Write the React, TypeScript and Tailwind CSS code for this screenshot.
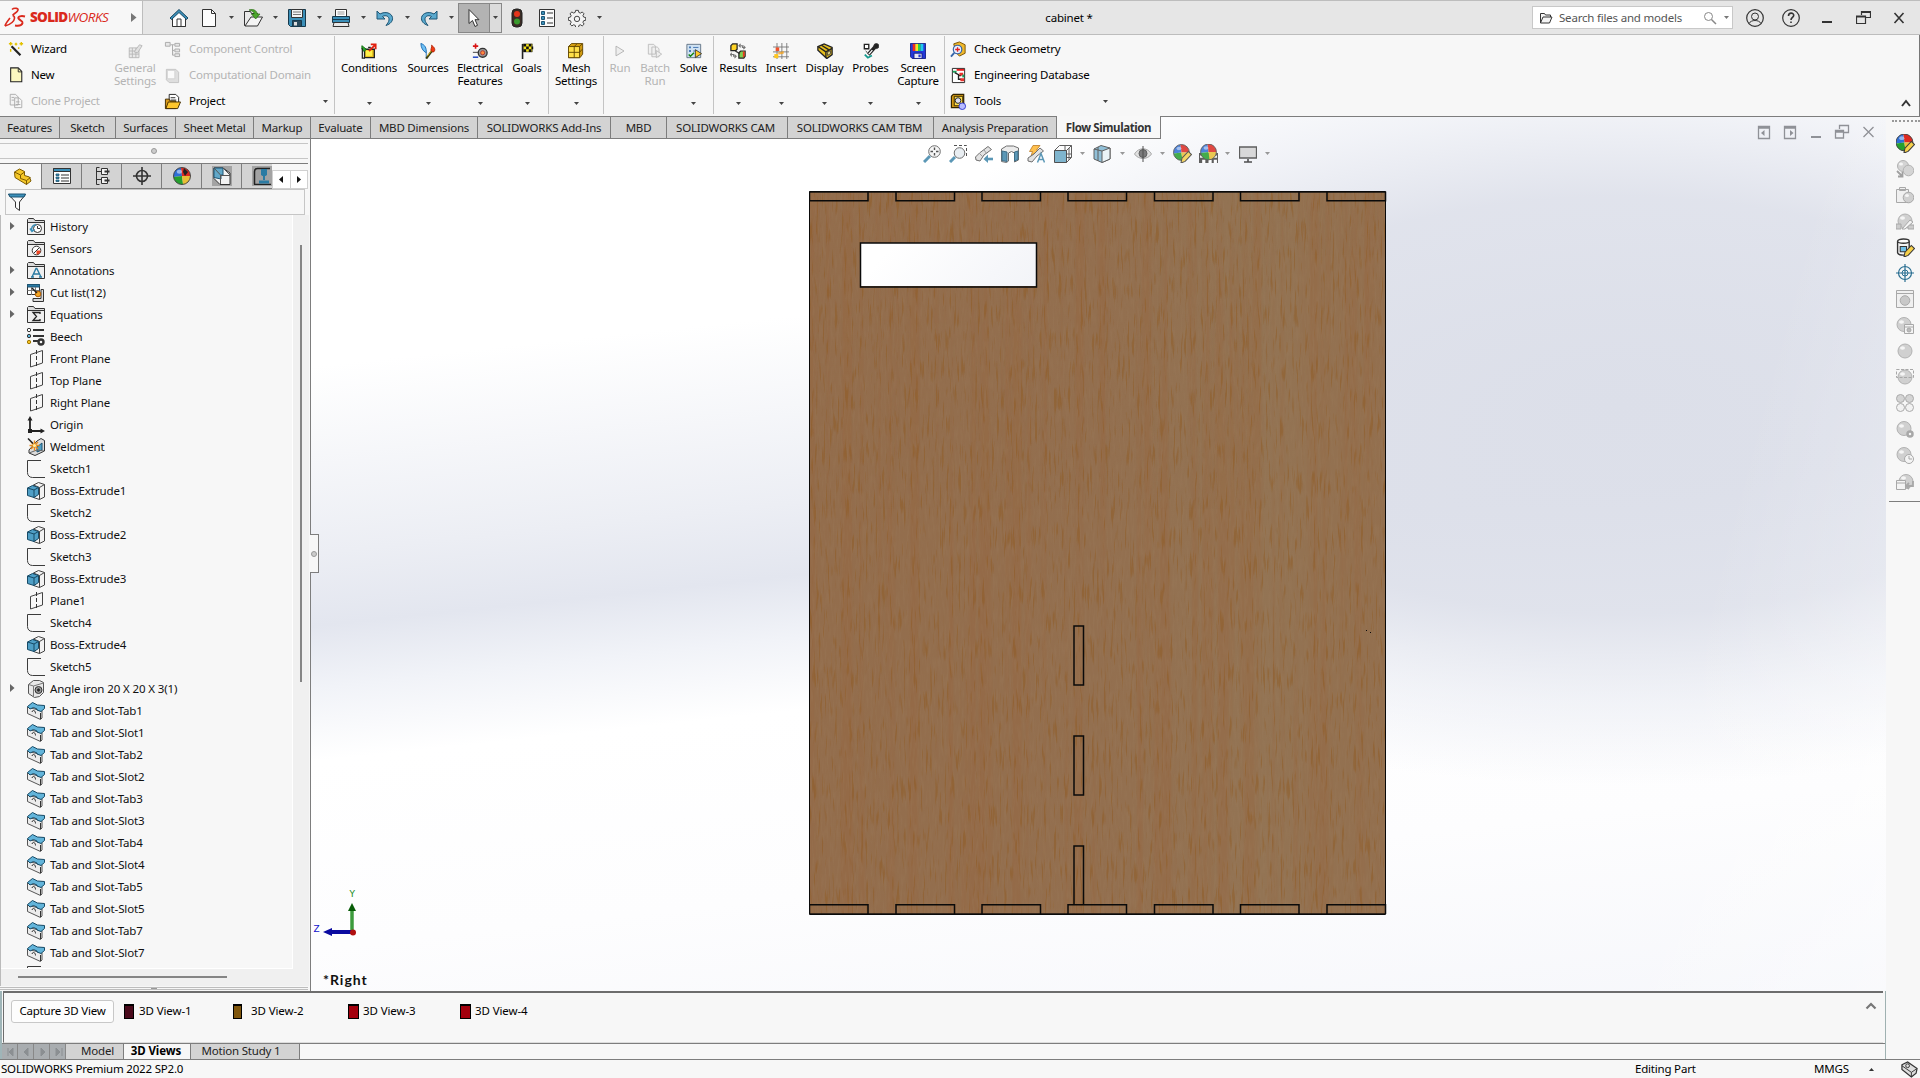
import React from "react";

type Kids = { children?: React.ReactNode };
const BLUE = "#3b8fb8";
const DARK = "#333333";

function Svg({ s = 18, vb = 18, children, className = "" }: Kids & { s?: number; vb?: number; className?: string }) {
  return (
    <svg width={s} height={s} viewBox={`0 0 ${vb} ${vb}`} fill="none" stroke={DARK} strokeWidth="1" className={"shrink-0 " + className}>
      {children}
    </svg>
  );
}

function Down({ c = "#444" }: { c?: string }) {
  return (
    <svg width="5" height="3" viewBox="0 0 5 3" className="shrink-0">
      <path d="M0 0h5L2.500 3z" fill={c} />
    </svg>
  );
}

/* ---------- title bar icons ---------- */
const Home = () => (
  <Svg s={20} vb={20}>
    <path d="M3.500 9v9.500h13V9L10 3z" fill="#fff" />
    <path d="M1 10L10 1.500 19 10l-1.500 1.500L10 4.500 2.500 11.500z" fill={BLUE} stroke="#1c4a63" />
    <path d="M8 18v-7h4v7M3.500 18.500h13" />
  </Svg>
);
const Doc = () => (
  <Svg s={20} vb={20}>
    <path d="M3.500 1.500h9l4 4v13h-13z" fill="#fdfdfd" />
    <path d="M12.500 1.500v4h4" />
  </Svg>
);
const OpenIcon = () => (
  <Svg s={20} vb={20}>
    <path d="M1.500 3.500h6l1 2h6v12h-13z" fill="#e9e9e9" />
    <path d="M2 18L8 9h11.500l-5 9z" fill="#f4f4f4" />
    <path d="M6 2c5-1.500 8 1 8.200 4H17l-4.300 5L8.500 6h2.700C11 4 9 2.600 6 2z" fill="#4ca52c" stroke="#2c6f16" strokeWidth=".7" />
  </Svg>
);
const Save = () => (
  <Svg s={20} vb={20}>
    <path d="M1.500 1.500h17v17H3.500l-2-2z" fill={BLUE} stroke="#17394c" />
    <path d="M4.500 1.500h11v8h-11z" fill="#f4f4f4" />
    <path d="M6 4h8M6 6.500h8" stroke="#777" />
    <path d="M5.500 12.500h9v6h-9z" fill="#2a4a5c" stroke="#17394c" />
    <path d="M7 14h3v3.500H7z" fill="#ddd" stroke="none" />
  </Svg>
);
const Print = () => (
  <Svg s={20} vb={20}>
    <path d="M4.500 8V1.500h11V8" fill="#fff" />
    <path d="M6.500 4h7M6.500 6h7" stroke="#999" />
    <path d="M1.500 8.500h17v6h-17z" fill={BLUE} stroke="#17394c" />
    <path d="M3 14.500h14l1 4H2z" fill="#e8e8e8" />
    <path d="M2 11.500h16" stroke="#17394c" />
  </Svg>
);
const Undo = () => (
  <Svg s={20} vb={20}>
    <path d="M2 3v8h8L7.500 8.500C11 6.500 14.500 8.500 14 12c-.3 2-1.500 3.500-3 5.500 4.500-1.500 7-4.500 6.500-8C16.500 5 10.500 3 5 6z" fill="#5aa9ce" stroke="#1d5574" />
  </Svg>
);
const Redo = () => (
  <Svg s={20} vb={20}>
    <path d="M18 3v8h-8l2.500-2.500C9 6.500 5.500 8.500 6 12c.3 2 1.500 3.500 3 5.500C4.500 16 2 13 2.500 9.500 3.500 5 9.500 3 15 6z" fill="#5aa9ce" stroke="#1d5574" />
  </Svg>
);
const Cursor = () => (
  <Svg s={20} vb={20}>
    <path d="M5 1.500v14l3.500-3 2.500 6 2.500-1.200-2.500-5.600H15z" fill="#fff" />
  </Svg>
);
const Traffic = () => (
  <Svg s={20} vb={20}>
    <rect x="5" y="1" width="10" height="18" rx="4" fill="#3b2b25" stroke="#222" />
    <circle cx="10" cy="6" r="3" fill="#e5351c" stroke="none" />
    <circle cx="10" cy="13.500" r="3" fill="#3a9a2d" stroke="none" />
  </Svg>
);
const ListIcon = () => (
  <Svg s={20} vb={20}>
    <path d="M2.500 1.500h15v17h-15z" fill="#fafafa" />
    <path d="M4.500 3.500h3v3h-3zM4.500 8.500h3v3h-3zM4.500 13.500h3v3h-3z" fill={BLUE} stroke="#1d5574" />
    <path d="M10 5h6M10 10h6M10 15h6" />
  </Svg>
);
const Gear = () => (
  <Svg s={18} vb={20}>
    <path d="M8.500 1.500h3l.5 2.300 1.800.8 2-1.300 2 2-1.200 2 .8 1.700 2.300.5v3l-2.300.5-.8 1.800 1.300 2-2.100 2-2-1.300-1.700.8-.5 2.300h-3l-.5-2.300-1.800-.8-2 1.300-2-2 1.200-2-.8-1.800-2.300-.5v-3l2.300-.5.8-1.700-1.300-2 2.100-2 2 1.200 1.700-.8z" fill="#f3f3f3" />
    <circle cx="10" cy="11" r="3" />
  </Svg>
);

/* ---------- ribbon icons ---------- */
const Wizard = () => (
  <Svg s={16}>
    <path d="M4 6l10 10" stroke="#222" strokeWidth="2.500" />
    <path d="M3 1v4M1 3h4M9 2v3M7.500 3.500h3M15 1v4M13 3h4M12 7v2M3 9v3" stroke="#e2c100" strokeWidth="1.600" />
  </Svg>
);
const NewDoc = () => (
  <Svg s={16}>
    <path d="M3 1h8.500l4 4v11.500H3z" fill="#fbf7c0" stroke="#222" strokeWidth="1.200" />
    <path d="M11.500 1.500v4h4" stroke="#222" />
  </Svg>
);
const Clone = () => (
  <Svg s={16} className="opacity-40">
    <path d="M2.500 1.500h6l3 3v9h-9z" fill="#eee" />
    <path d="M7.500 5.500h5l3 3v8h-8zM4 5h3M4 8h3M9 10h4M9 13h5" />
  </Svg>
);
const GenSet = () => (
  <Svg className="opacity-50">
    <path d="M2.500 5.500h11v11h-11zM2.500 9h11M2.500 12.500h11M6 5.500v11M10 5.500v11" fill="#ddd" stroke="#777" />
    <path d="M8 10l6-8 3 1-5 8z" fill="#ccc" stroke="#777" />
  </Svg>
);
const CompCtl = () => (
  <Svg s={17} className="opacity-60">
    <path d="M1.500 1.500h5v4h-5zM11.500 2.500h5v3h-5zM11.500 8.500h5v3h-5zM11.500 13.500h5v3h-5zM7 4h4M9 4v11h2M9 10h2" fill="#ddd" stroke="#777" />
  </Svg>
);
const CompDom = () => (
  <Svg s={17} className="opacity-40">
    <path d="M2.500 2.500h10l3 3v11h-10l-3-3z" fill="#bbb" stroke="#777" />
    <path d="M3.500 3.500h8v9h-8z" fill="#fff" stroke="#999" />
  </Svg>
);
const Project = () => (
  <Svg s={17}>
    <path d="M5.500 1.500h7l3 3v8h-10z" fill="#fff" stroke="#222" />
    <path d="M7 5h5M7 7.500h6" stroke="#222" />
    <path d="M1.500 6.500h4l1 2h6v8h-11z" fill="#d99a1b" stroke="#422c00" />
    <path d="M2 16.500l2.500-7h13l-3 7z" fill="#ffc62c" stroke="#422c00" />
  </Svg>
);
const Conditions = () => (
  <Svg>
    <path d="M4 7h11v9.500H4z" fill="#e8bf1e" stroke="#222" strokeWidth="1.500" />
    <path d="M5.500 8.500h7v6h-7z" fill="#fff04a" stroke="none" />
    <path d="M1 3l5 4-2.500 2.500L1 7z" fill="#2aa52a" stroke="#0a6a0a" />
    <path d="M9 9l7-7M11 1.500h5.500V7" stroke="#e02010" strokeWidth="2" />
    <path d="M1.500 6v11h3M8 5h3" stroke="#222" strokeWidth="1.400" />
  </Svg>
);
const Sources = () => (
  <Svg>
    <path d="M1 .500c4.500 1.500 6.500 5 6 10.500C3 9 1 5 1 .500z" fill="#6fc1f5" stroke="#1668b0" />
    <path d="M7 17.500v-7" stroke="#1668b0" />
    <path d="M13 10c-2-3 1-5 0-7.500 3 2 5 5 2.500 7.500z" fill="#f03a14" stroke="#b02000" />
    <path d="M7 17.500l6-8" stroke="#3b3b10" strokeWidth="2.400" />
    <path d="M8 15l4.500-6" stroke="#e2c11c" />
  </Svg>
);
const Electrical = () => (
  <Svg>
    <path d="M1 3.500h6M4 .500v6" stroke="#d81414" strokeWidth="1.800" />
    <path d="M1 16h6" stroke="#2c50c8" strokeWidth="1.800" />
    <circle cx="12" cy="11" r="5" fill="#999" stroke="#333" strokeWidth="1.500" />
    <circle cx="12" cy="11" r="2.300" fill="#ff8a3c" stroke="#a33" />
    <path d="M1 10.500h6" />
  </Svg>
);
const Goals = () => (
  <Svg>
    <path d="M4 1v17" stroke="#222" strokeWidth="1.800" />
    <path d="M5 1h10v9H5z" fill="#f5e31a" stroke="#222" strokeWidth=".6" />
    <path d="M5 1h3v3H5zM11 1h3v3h-3zM8 4h3v3H8zM14 4h2v3h-2zM5 7h3v3H5zM11 7h3v3h-3z" fill="#111" stroke="none" />
  </Svg>
);
const Mesh = () => (
  <Svg>
    <path d="M4 .500h12.500v12l-3 4H.500V4z" fill="#d29c10" stroke="#5b4200" />
    <path d="M.500 4h12.500v12.500H.500z" fill="#ffe04a" stroke="#5b4200" />
    <path d="M.500 10.500H13M7 4v12.500M7 4l3-3M13 10.500l3-3.500M13 4l3-3" stroke="#5b4200" />
  </Svg>
);
const Run = () => (
  <Svg>
    <path d="M4.500 3.500l9 5.500-9 5.500z" stroke="#b0b0b0" fill="#eee" />
  </Svg>
);
const Batch = () => (
  <Svg>
    <path d="M1.500 1.500h6l2 2v9h-8zM5.500 4.500h6l2 2v9h-8z" stroke="#bbb" fill="#f0f0f0" />
    <path d="M10.500 8.500l6 4-6 4z" stroke="#bbb" fill="#eee" />
  </Svg>
);
const Solve = () => (
  <Svg>
    <path d="M1 1.500h15.500v15H1z" fill="#cfe2f3" stroke="#5d6f80" />
    <path d="M3.500 4h2v2h-2zM3.500 8h2v2h-2z" fill="#3b6fb0" stroke="none" />
    <path d="M8 5h6M8 9h3" stroke="#3b6fb0" />
    <path d="M3 13l2 2 4-4" stroke="#13850f" strokeWidth="1.600" />
    <path d="M10.500 7.500l7 4.500-7 4.500z" fill="#ffc928" stroke="#333" />
  </Svg>
);
const Results = () => (
  <Svg>
    <path d="M1 3l2-2h5v6L6.500 8.500H1z" fill="#ffd426" stroke="#222" strokeWidth="1.400" />
    <path d="M10 11l2-2h5v6l-1.500 2H10z" fill="#7fcf52" stroke="#222" strokeWidth="1.400" />
    <path d="M14.500 9.500v7l2-2V9.500z" fill="#ee3a20" stroke="none" />
    <path d="M11 3h3v2h3M12 1l-2 2 2 2M15 3l2 2-2 2M1 13h3v2h3M2 11l-1.500 2L2 15M5 13l2 2-2 2" stroke="#777" strokeWidth="1.200" />
    <path d="M6 9l5 3" strokeWidth="1.500" />
  </Svg>
);
const Insert = () => (
  <Svg>
    <path d="M4.500 0v18M10 0v18M15.500 0v18M0 4.500h18M0 10h18M0 15.500h18" stroke="#777" />
    <path d="M3 5h4v4H3z" fill="#f0522c" stroke="none" />
    <path d="M1.500 12.500H6V17H1.500z" fill="#ffc61e" stroke="none" />
    <path d="M5 11l7-2v3l-5 1z" fill="#f5a524" stroke="none" opacity=".8" />
  </Svg>
);
const Display = () => (
  <Svg>
    <path d="M1 4l7-3 9 4v8l-6 4.500L1 8z" fill="#e6be1c" stroke="#222" strokeWidth="1.500" />
    <path d="M1 4l9 6 7-4M10 10v7M5 2.500l8 5" stroke="#222" strokeWidth="1.500" />
    <path d="M12 10.500l3-2V12l-3 2z" fill="#fff39a" />
  </Svg>
);
const Probes = () => (
  <Svg>
    <path d="M1.500 1.500h5v5h-5z" fill="#fff" stroke="#222" strokeWidth="1.500" />
    <path d="M6 13l8-9" stroke="#222" strokeWidth="4" />
    <path d="M6.500 12.500l4-4.500" stroke="#fff" strokeWidth="1.500" />
    <circle cx="15" cy="3.500" r="2.800" fill="#222" />
    <path d="M2 13l3.500 3.500L10 14" stroke="#159a8e" strokeWidth="2" />
    <path d="M3 9l2 2" stroke="#222" />
  </Svg>
);
const Screen = () => (
  <Svg>
    <path d="M.500.500h17v17h-15l-2-2z" fill="#2438d8" stroke="#111c80" />
    <path d="M3 1h3v8H3z" fill="#f02c1c" stroke="none" />
    <path d="M6 1h3v8H6z" fill="#ffe11f" stroke="none" />
    <path d="M9 1h3v8H9z" fill="#28d04a" stroke="none" />
    <path d="M12 1h3v8h-3z" fill="#20c8f0" stroke="none" />
    <path d="M4.500 11.500h9v6h-9z" fill="#e8e8f4" stroke="#111c80" />
    <path d="M9.500 13h2.500v3H9.500z" fill="#2438d8" stroke="none" />
  </Svg>
);
const Check = () => (
  <Svg s={17}>
    <path d="M4 3l6-2 6 3v9l-6 3-4-4z" fill="#f0b82a" stroke="#7a5200" />
    <circle cx="8" cy="9" r="4.500" fill="#e8f0ff" stroke="#3564a8" strokeWidth="1.300" />
    <path d="M5.500 9h5M8 6.500v5" stroke="#e02020" strokeWidth="1.400" />
    <path d="M1 16.500l3.500-4" stroke="#3564a8" strokeWidth="2" />
  </Svg>
);
const EngDb = () => (
  <Svg s={17}>
    <path d="M2.500 1.500h13v15h-13z" fill="#fff" stroke="#222" />
    <path d="M7 2h8v2H7z" fill="#e81c1c" stroke="none" />
    <path d="M3 4h4v2H3z" fill="#18a058" stroke="none" />
    <path d="M5 6l4 2v5h3M9 9h3" stroke="#222" strokeWidth="1.400" />
    <path d="M10 6h4v3h-4zM11 12h4v3h-4z" fill="#e8322c" stroke="none" />
    <path d="M13 8h2v3h-2z" fill="#18a058" stroke="none" />
  </Svg>
);
const Tools = () => (
  <Svg s={17}>
    <path d="M1.500 3.500l2-2h11v12l-2 2h-11z" fill="#d59a13" stroke="#332400" strokeWidth="1.300" />
    <path d="M4.500 3.500h9v10h-9z" fill="#ffe14c" stroke="#332400" />
    <circle cx="8.500" cy="8" r="3" fill="#dde" stroke="#222" />
    <circle cx="13" cy="14" r="3.500" fill="#b8bcff" stroke="#3038d0" />
  </Svg>
);

/* ---------- feature tree icons ---------- */
const Folder = ({ children }: Kids) => (
  <Svg>
    <path d="M.500 16.500V1.500l1-1h5l1.500 2h9.500v14z" fill="#dcdcdc" />
    <path d="M1.500 5.500h15" stroke="#f8f8f8" />
    <path d="M.500 4.500h17" />
    <path d="M1 5h16v11H1z" fill="#efefef" stroke="none" />
    {children}
  </Svg>
);
const treeIcon: Record<string, React.ReactNode> = {
  history: (
    <Folder>
      <circle cx="10.500" cy="10.500" r="4" fill="#fff" />
      <path d="M10.500 8v2.500h2.500" />
      <path d="M5 13c-1-3 0-6 4-6.500M3 10.500l2 3 2.500-2" stroke={BLUE} strokeWidth="1.500" />
    </Folder>
  ),
  sensors: (
    <Folder>
      <circle cx="9.500" cy="10.500" r="4.300" fill="#fff" />
      <path d="M9.500 10.500h4a4 4 0 0 1-4 4z" fill="#ee4422" stroke="none" />
      <path d="M7 13l5-5" />
    </Folder>
  ),
  annotations: (
    <Folder>
      <path d="M5 15L9 6.500h.8L14 15M6.500 12h6M4 15h3M12 15h3" stroke="#2b7ba3" strokeWidth="1.400" />
    </Folder>
  ),
  cutlist: (
    <Svg>
      <path d="M.500.500h12v10H.500z" fill="#fff" />
      <path d="M.500.500h12v2.500H.500z" fill="#2b7ba3" stroke="#1d5574" />
      <path d="M.500 6.500h12M4.500 3v8M8.500 3v8" stroke="#777" />
      <path d="M6 14.500h8v-9h2.500v12H6z" fill="#ddd" />
      <circle cx="11" cy="10" r="2.800" fill="#f4a623" stroke="#b25c00" />
      <path d="M5 4l5 5" stroke="#222" strokeWidth="1.500" />
    </Svg>
  ),
  equations: (
    <Folder>
      <path d="M13 8V6.500H6l3.500 4L6 14.500h7V13" stroke="#222" strokeWidth="1.300" />
    </Folder>
  ),
  material: (
    <Svg>
      <path d="M6 2h11M6 8h11M6 13h5" strokeWidth="1.800" />
      <circle cx="2" cy="2" r="1.700" fill="#fff" />
      <circle cx="2" cy="8" r="1.700" fill="#5ab4dc" />
      <circle cx="2" cy="14" r="1.700" fill="#f4c020" stroke="#a07800" />
      <circle cx="14" cy="14" r="2.500" strokeWidth="2.400" />
    </Svg>
  ),
  plane: (
    <Svg>
      <path d="M3.500 4.500l12-4v12.500l-12 4z" stroke="#444" />
      <path d="M9.500 0v18" strokeDasharray="4 2" />
    </Svg>
  ),
  origin: (
    <Svg>
      <path d="M3 3v12h12" stroke="#222" strokeWidth="1.800" />
      <path d="M3 0L.500 4.500h5zM18 15l-4.500-2.500v5z" fill="#222" stroke="none" />
      <path d="M1 13h4v4H1z" fill="#222" stroke="none" />
    </Svg>
  ),
  weld: (
    <Svg>
      <path d="M10 3l4-2.500 3.500 2V13L8 17.500l-6-2.500v-3z" fill="#dcdcdc" />
      <path d="M10 9l5-4v7l-5 2z" fill="#4f9fc6" stroke="#1d5574" />
      <path d="M2 15l8-3 7 1" stroke="#666" />
      <path d="M7.500 2.500v10M2.500 7.500h10M4 4l7 7M11 4l-7 7" stroke="#e88a1a" strokeWidth="1.400" />
      <circle cx="7.500" cy="7.500" r="1.600" fill="#fff0a0" stroke="none" />
      <path d="M1 .500l5 5" stroke="#222" strokeWidth="1.500" />
    </Svg>
  ),
  sketch: (
    <Svg>
      <path d="M14 .500H.500v12c0 2.500 1.500 5 5 5H18" stroke="#3c3c3c" />
    </Svg>
  ),
  boss: (
    <Svg>
      <path d="M6.500 3l5-2.500 6 2V15l-5 2.500-6-2z" fill="#f2f2f2" stroke="#444" />
      <path d="M12.500 5.500v12M6.500 3l6 2.500 5-3" stroke="#444" />
      <path d="M.500 6l5-2.500 6 2v7l-4.500 3L.500 13.500z" fill="#4f9fc6" stroke="#174a66" />
      <path d="M.500 6L7 8v7.500M7 8l4.500-2.500" stroke="#174a66" />
    </Svg>
  ),
  angle: (
    <Svg>
      <path d="M1.500 4.500l5-4h6l4 2v10l-4 4-5 1-6-4z" fill="#e8e8e8" stroke="#555" />
      <path d="M1.500 4.500l5 1.500v11M6.500 6l10-3" stroke="#777" />
      <circle cx="11.500" cy="10" r="3.500" fill="#999" stroke="#333" />
      <circle cx="11.500" cy="10" r="1.200" fill="#222" />
    </Svg>
  ),
  tab: (
    <Svg>
      <path d="M.500 5v6.500l13 6 1.500-1.500V9z" fill="#ececec" stroke="#555" />
      <path d="M.500 4.500L5.500.500l5 2.500 7 .5v3l-3.500 3-4-1.500V7L6.500 5.500 3 7z" fill="#62b4da" stroke="#174a66" />
      <path d="M5 10c.5-2.500 3.500-2 3.500 1.500M13.500 11v6" stroke="#333" />
    </Svg>
  ),
};

const rows: [string, string, boolean?][] = [
  ["history", "History", true],
  ["sensors", "Sensors"],
  ["annotations", "Annotations", true],
  ["cutlist", "Cut list(12)", true],
  ["equations", "Equations", true],
  ["material", "Beech"],
  ["plane", "Front Plane"],
  ["plane", "Top Plane"],
  ["plane", "Right Plane"],
  ["origin", "Origin"],
  ["weld", "Weldment"],
  ["sketch", "Sketch1"],
  ["boss", "Boss-Extrude1"],
  ["sketch", "Sketch2"],
  ["boss", "Boss-Extrude2"],
  ["sketch", "Sketch3"],
  ["boss", "Boss-Extrude3"],
  ["plane", "Plane1"],
  ["sketch", "Sketch4"],
  ["boss", "Boss-Extrude4"],
  ["sketch", "Sketch5"],
  ["angle", "Angle iron 20 X 20 X 3(1)", true],
  ["tab", "Tab and Slot-Tab1"],
  ["tab", "Tab and Slot-Slot1"],
  ["tab", "Tab and Slot-Tab2"],
  ["tab", "Tab and Slot-Slot2"],
  ["tab", "Tab and Slot-Tab3"],
  ["tab", "Tab and Slot-Slot3"],
  ["tab", "Tab and Slot-Tab4"],
  ["tab", "Tab and Slot-Slot4"],
  ["tab", "Tab and Slot-Tab5"],
  ["tab", "Tab and Slot-Slot5"],
  ["tab", "Tab and Slot-Tab7"],
  ["tab", "Tab and Slot-Slot7"],
  ["sketch", ""],
];

/* ---------- shared spheres ---------- */
const ColorBall = ({ cx = 9, cy = 9, r = 7.5 }: { cx?: number; cy?: number; r?: number }) => (
  <g stroke="none" transform={`translate(${cx} ${cy}) scale(${r / 8})`}>
    <path d="M0 0L-1-8A8 8 0 0 0-8 1z" fill="#2f6fd6" />
    <path d="M0 0L-1-8A8 8 0 0 1 8 0z" fill="#dd2a22" />
    <path d="M0 0L-8 1A8 8 0 0 0 1 8z" fill="#25a02e" />
    <path d="M0 0L1 8A8 8 0 0 0 8 0z" fill="#e9bf35" />
    <circle r="8" fill="none" stroke="#444" strokeWidth=".9" />
    <ellipse cx="-2.500" cy="-4" rx="2.500" ry="1.800" fill="#fff" opacity=".5" />
  </g>
);
const Pencil = () => <path d="M7.500 18l1-4.500L14.500 7l3 3-6 6.500z" fill="#f6d14a" stroke="#3a3a3a" />;

function Cell({ w, children, className = "" }: Kids & { w: string; className?: string }) {
  return <div className={`flex shrink-0 items-center justify-center ${w} ${className}`}>{children}</div>;
}

function TitleBar() {
  return (
    <header className="flex h-[35px] shrink-0 items-center border-t border-b border-[#bdbdbd] bg-[#e6e6e6]">
      <div className="flex h-full w-[143px] shrink-0 items-center border-r border-[#bdbdbd] bg-[#f7f7f7] pl-[4px]">
        <svg width="22" height="22" viewBox="0 0 22 22" fill="none" stroke="#da291c" strokeWidth="1.600">
          <path d="M8 2.500c2-2 8-1.500 5.500 1.500-1.500 2-3.500 2.500-5 4.500M8.500 8.500c3 .5 2.500 4.500-.5 7-2 1.700-4 3-7 3.500M1 19c.5-3 3.500-6 5-8" />
          <path d="M21 9.500c-4-1-7.500 0-6.500 2s4.500 2 4 4.500c-.5 2.200-4 3-7.500 2.500" strokeWidth="2" />
        </svg>
        <span className="ml-[4px] w-[92px] whitespace-nowrap font-['Open_Sans'] text-[13.500px] leading-none tracking-[-0.5px] text-[#da291c]">
          <b className="font-extrabold tracking-[-0.7px]">SOLID</b><span className="italic">WORKS</span>
        </span>
        <svg width="6" height="9" viewBox="0 0 6 9" className="ml-[9px]"><path d="M0 0l5.500 4.500L0 9z" fill="#777" /></svg>
      </div>
      <Cell w="w-[22px]" className="ml-[25px]"><Home /></Cell>
      <Cell w="w-[22px]" className="ml-[8px]"><Doc /></Cell>
      <Cell w="w-[22px]"><Down /></Cell>
      <Cell w="w-[22px]"><OpenIcon /></Cell>
      <Cell w="w-[22px]"><Down /></Cell>
      <Cell w="w-[22px]"><Save /></Cell>
      <Cell w="w-[22px]"><Down /></Cell>
      <Cell w="w-[22px]"><Print /></Cell>
      <Cell w="w-[22px]"><Down /></Cell>
      <Cell w="w-[22px]"><Undo /></Cell>
      <Cell w="w-[22px]"><Down /></Cell>
      <Cell w="w-[22px]"><Redo /></Cell>
      <Cell w="w-[18px]" className="pl-1"><Down /></Cell>
      <div className="flex h-[30px] w-[44px] shrink-0 border border-[#888]">
        <Cell w="w-[30px]" className="bg-[#b3b3b3]"><Cursor /></Cell>
        <Cell w="w-[12px]" className="border-l border-[#888] bg-[#dcdcdc]"><Down /></Cell>
      </div>
      <Cell w="w-[30px]"><Traffic /></Cell>
      <Cell w="w-[30px]"><ListIcon /></Cell>
      <Cell w="w-[30px]"><Gear /></Cell>
      <Cell w="w-[12px]" className="pl-[2px]"><Down /></Cell>
      <div className="ml-[419px] w-[92px] shrink-0 text-center text-black">cabinet *</div>
      <div className="ml-auto flex h-[23px] w-[201px] shrink-0 items-center border border-[#c8c8c8] bg-white text-[#555]">
        <Svg s={14} vb={14} className="ml-[6px]">
          <path d="M1.500 12V2.500h4l1 1.500h5v2M1.500 12L4 6h9l-2.500 6z" fill="#f4f4f4" />
        </Svg>
        <span className="ml-[6px] w-[144px] whitespace-nowrap">Search files and models</span>
        <Svg s={14} vb={14}>
          <circle cx="5.500" cy="5.500" r="4" stroke="#888" />
          <path d="M8.500 8.500L13 13" stroke="#888" strokeWidth="1.500" />
        </Svg>
        <span className="ml-[7px]"><Down c="#777" /></span>
      </div>
      <Cell w="w-[36px]" className="ml-[4px]">
        <Svg><circle cx="9" cy="9" r="8.300" strokeWidth="1.200" /><circle cx="9" cy="7.500" r="3.500" /><path d="M3 14.500c2-4 10-4 12 0" /></Svg>
      </Cell>
      <Cell w="w-[36px]">
        <Svg><circle cx="9" cy="9" r="8.300" strokeWidth="1.200" /><path d="M6.500 7c0-4 5.500-3.500 5.200-.5C11.500 8.300 9 8.500 9 11M9 12.500V14" strokeWidth="1.600" /></Svg>
      </Cell>
      <Cell w="w-[36px]"><div className="mt-[9px] h-[2px] w-[10px] bg-[#333]" /></Cell>
      <Cell w="w-[36px]"><Svg s={15} vb={15}><path d="M5.500 5V1.500h9v6H10M.500 6h9v7.500h-9zM.500 7h9M5.500 2.500h9" strokeWidth="1.200" /></Svg></Cell>
      <Cell w="w-[36px]" className="mr-[3px]"><Svg s={12} vb={12}><path d="M1.500 1l9 10M10.500 1l-9 10" strokeWidth="1.600" /></Svg></Cell>
    </header>
  );
}

function Tool({ w, icon, a, b, off, arrow = true }: { w: string; icon: React.ReactNode; a: string; b?: string; off?: boolean; arrow?: boolean }) {
  return (
    <div className={`flex shrink-0 flex-col items-center pt-[8px] [&>svg]:h-4 [&>svg]:w-4 ${w} ${off ? "text-[#b4b4b4]" : "text-black"}`}>
      {icon}
      <span className="mt-[2px] h-[13px] whitespace-nowrap leading-[13px]">{a}</span>
      <span className="h-[13px] whitespace-nowrap leading-[13px]">{b}</span>
      {arrow && <span className="mt-[15px] flex"><Down /></span>}
    </div>
  );
}

function Line({ icon, text, off, iw = "w-[31px]" }: { icon: React.ReactNode; text: string; off?: boolean; iw?: string }) {
  return (
    <div className={`flex h-[26px] items-center whitespace-nowrap ${off ? "text-[#b4b4b4]" : "text-black"}`}>
      <span className={`${iw} shrink-0`}>{icon}</span>
      {text}
    </div>
  );
}

function Sep() {
  return <div className="mt-px h-[78px] w-px shrink-0 bg-[#c4c4c4]" />;
}

function Ribbon() {
  return (
    <section className="flex h-[81px] shrink-0 border-r border-[#777] bg-[#f7f7f7]">
      <div className="w-[108px] shrink-0 pt-[1px] [&>div]:pl-[8px]">
        <Line icon={<Wizard />} text="Wizard" iw="w-[23px]" />
        <Line icon={<NewDoc />} text="New" iw="w-[23px]" />
        <Line icon={<Clone />} text="Clone Project" off iw="w-[23px]" />
      </div>
      <Tool w="w-[54px]" icon={<GenSet />} a="General" b="Settings" off arrow={false} />
      <div className="w-[172px] shrink-0 pt-[1px] [&>div]:pl-[2px]">
        <Line icon={<CompCtl />} text="Component Control" off iw="w-[25px]" />
        <Line icon={<CompDom />} text="Computational Domain" off iw="w-[25px]" />
        <div className="flex items-center justify-between pr-[6px]">
          <Line icon={<Project />} text="Project" iw="w-[25px]" />
          <Down />
        </div>
      </div>
      <Sep />
      <div className="flex w-[213px] shrink-0 pl-[3px]">
        <Tool w="w-[62px]" icon={<Conditions />} a="Conditions" />
        <Tool w="w-[56px]" icon={<Sources />} a="Sources" />
        <Tool w="w-[48px]" icon={<Electrical />} a="Electrical" b="Features" />
        <Tool w="w-[46px]" icon={<Goals />} a="Goals" />
      </div>
      <Sep />
      <Tool w="w-[54px]" icon={<Mesh />} a="Mesh" b="Settings" />
      <Sep />
      <Tool w="w-[32px]" icon={<Run />} a="Run" off arrow={false} />
      <Tool w="w-[38px]" icon={<Batch />} a="Batch" b="Run" off arrow={false} />
      <Tool w="w-[39px]" icon={<Solve />} a="Solve" />
      <Sep />
      <Tool w="w-[48px]" icon={<Results />} a="Results" />
      <Tool w="w-[38px]" icon={<Insert />} a="Insert" />
      <Tool w="w-[49px]" icon={<Display />} a="Display" />
      <Tool w="w-[43px]" icon={<Probes />} a="Probes" />
      <Tool w="w-[52px]" icon={<Screen />} a="Screen" b="Capture" />
      <Sep />
      <div className="w-[163px] shrink-0 pt-[1px] [&>div]:pl-[5px]">
        <Line icon={<Check />} text="Check Geometry" iw="w-[24px]" />
        <Line icon={<EngDb />} text="Engineering Database" iw="w-[24px]" />
        <div className="flex items-center justify-between">
          <Line icon={<Tools />} text="Tools" iw="w-[24px]" />
          <Down />
        </div>
      </div>
      <Svg s={10} vb={10} className="ml-auto mr-[8px] mt-[63px]"><path d="M1 8l4-5 4 5" strokeWidth="2" /></Svg>
    </section>
  );
}

const tabs: [string, string][] = [
  ["Features", "w-[60px]"],
  ["Sketch", "w-[56px]"],
  ["Surfaces", "w-[60px]"],
  ["Sheet Metal", "w-[78px]"],
  ["Markup", "w-[57px]"],
  ["Evaluate", "w-[60px]"],
  ["MBD Dimensions", "w-[107px]"],
  ["SOLIDWORKS Add-Ins", "w-[133px]"],
  ["MBD", "w-[56px]"],
  ["SOLIDWORKS CAM", "w-[121px] pr-[3px]"],
  ["SOLIDWORKS CAM TBM", "w-[146px] pr-[2px]"],
  ["Analysis Preparation", "w-[123px]"],
];

function CommandTabs() {
  return (
    <nav className="flex h-[23px] w-[1161px] shrink-0 text-[#222]">
      {tabs.map(([t, w]) => (
        <div key={t} className={`flex shrink-0 items-center justify-center whitespace-nowrap border-r border-b border-t border-[#7d7d7d] bg-[#d3d3d3] ${w}`}>{t}</div>
      ))}
      <div className="flex w-[104px] shrink-0 items-center justify-center whitespace-nowrap border-r border-b border-[#7d7d7d] bg-[#f8f8f8] pt-px font-bold tracking-[-0.4px] text-[#333]">Flow Simulation</div>
    </nav>
  );
}

const panelTabs = [
  <Svg key="part">
    <path d="M.500 4l5-3 5 2.500v4l5 1.500 1.500 4-4.500 3.500L1 9.500z" fill="#f5c829" stroke="#7d5b00" />
    <path d="M.500 4l6 3v3.500l6 2v4M6.500 7l4-3M12.500 12.500l4-3" stroke="#7d5b00" />
  </Svg>,
  <Svg key="props">
    <path d="M.500 1.500h17v15H.500z" fill="#fdfdfd" />
    <path d="M.500 1.500h17v3H.500z" fill={BLUE} />
    <path d="M3 7h3v1.500H3zM3 10h3v1.500H3zM3 13h3v1.500H3z" fill={BLUE} stroke="#1d5574" strokeWidth=".8" />
    <path d="M8 8h8M8 11h8M8 14h8" />
  </Svg>,
  <Svg key="cfg">
    <path d="M6.500.500H3.500v17h3M3.500 4.500h5M3.500 12.500h5" />
    <path d="M8.500 1.500h6v6h-6zM8.500 10.500h6v6h-6z" fill="#f4f4f4" />
    <path d="M11.500 4.500h5M11.500 13.500h5" strokeWidth="2" />
  </Svg>,
  <Svg key="dim">
    <circle cx="9" cy="9" r="5.500" strokeWidth="1.600" />
    <path d="M9 0v18M0 9h18" strokeWidth="1.600" />
  </Svg>,
  <Svg key="disp"><ColorBall r={8.5} /><path d="M11 1l4 4-3 4-2-4z" fill="#222" stroke="none" /></Svg>,
  <div key="cam" className="flex h-5 w-5 items-center justify-center bg-[#a3a3a3]">
    <Svg><path d="M1 1h9l7 5v11.500H7l-6-6z" fill="#f2f2f2" /><path d="M1 1h9v7H8v4l-7-1.500z" fill="#62a8c8" stroke="#1d5574" /><path d="M7.500 17V8.500H17M1 1l7 7.500M10 1l7 7" stroke="#555" /></Svg>
  </div>,
  <div key="tool" className="flex h-5 w-5 items-center justify-center bg-[#a3a3a3]">
    <Svg><path d="M1.500 17.500v-13c0-2 1-3 3-3H17M1 17.500h17" stroke="#222" strokeWidth="1.500" /><path d="M8 2h6v6l-1.500 1h-3L8 8zM10 9h2v4h-2zM6 13.500h10v3H6z" fill="#2b7ba3" stroke="none" /></Svg>
  </div>,
];

function FeaturePanel() {
  return (
    <aside className="flex min-h-0 w-[311px] shrink-0 flex-col border-r border-[#7d7d7d] bg-[#f7f7f7]">
      <div className="mt-[4px] flex h-[16px] w-[308px] shrink-0 items-center justify-center border-b border-t border-[#c6c6c6]">
        <div className="h-[6px] w-[6px] rounded-full border border-[#999] bg-[#ccc]" />
      </div>
      <div className="mt-[4px] flex h-[26px] w-[308px] shrink-0 overflow-hidden border-t border-[#7d7d7d]">
        {panelTabs.map((icon, i) => (
          <div
            key={i}
            className={i === 0 ? "flex w-[42px] shrink-0 items-center justify-center border-r border-[#7d7d7d] bg-[#f7f7f7] pl-[4px]" : i < 6 ? "flex w-[40px] shrink-0 items-center justify-center border-r border-b border-[#7d7d7d] bg-[#d3d3d3]" : "flex w-[30px] shrink-0 items-center justify-end border-b border-[#7d7d7d] bg-[#d3d3d3]"}
          >
            {icon}
          </div>
        ))}
        <div className="mt-[6px] flex flex-1 border border-[#d0d0d0] bg-white">
          <div className="flex flex-1 items-center justify-center border-r border-[#d0d0d0]"><svg width="4" height="7"><path d="M4 0v7L0 3.500z" fill="#111" /></svg></div>
          <div className="flex flex-1 items-center justify-center"><svg width="4" height="7"><path d="M0 0v7l4-3.500z" fill="#111" /></svg></div>
        </div>
      </div>
      <div className="ml-[5px] flex h-[26px] w-[300px] shrink-0 items-center border border-[#c6c6c6] pl-[2px]">
        <Svg><path d="M.500 1.500h17l-6 7.500v8.500l-4-3V9z" fill="#fafafa" /><path d="M.500 1h17l-1.500 3H2z" fill={BLUE} stroke="#1d5574" /></Svg>
      </div>
      <div className="flex min-h-0 flex-1 border-l border-[#bbb]">
        <div className="w-[292px] overflow-hidden border-b border-r border-white pt-px">
          {rows.map(([icon, label, exp], i) => (
            <div key={i} className="flex h-[22px] items-center">
              <span className="w-[26px] shrink-0 pl-[9px]">
                {exp && <svg width="5" height="8" className="-mt-[2px]"><path d="M0 0l4.500 4L0 8z" fill="#666" /></svg>}
              </span>
              {treeIcon[icon]}
              <span className="ml-[5px] whitespace-nowrap tracking-[-0.12px] text-[#111]">{label}</span>
            </div>
          ))}
        </div>
        <div className="w-[16px] bg-[#f0f0f0] pl-[7px] pt-[30px]"><div className="h-[437px] w-[2px] bg-[#858585]" /></div>
      </div>
      <div className="h-[17px] w-[309px] shrink-0 border-l border-[#bbb] bg-[#f0f0f0] pl-[17px] pt-[7px]"><div className="h-[2px] w-[209px] bg-[#858585]" /></div>
      <div className="mb-[1px] mt-[1px] flex h-[3px] w-[308px] shrink-0 justify-center border-b border-t border-[#bdbdbd]"><div className="h-px w-[6px] bg-[#999]" /></div>
    </aside>
  );
}

const notches = [0, 86.5, 172.5, 258.5, 345, 431, 517.5];

function Board() {
  return (
    <svg width="579" height="726" viewBox="0 0 579 726" fill="none">
      <defs>
        <filter id="fine" x="0" y="0" width="100%" height="100%" colorInterpolationFilters="sRGB">
          <feTurbulence type="fractalNoise" baseFrequency="0.42 0.036" numOctaves="2" seed="11" />
          <feColorMatrix values="0 0 0 0 .56  0 0 0 0 .34  0 0 0 0 .1  6 0 0 0 -3.500" />
        </filter>
        <filter id="broad" x="0" y="0" width="100%" height="100%" colorInterpolationFilters="sRGB">
          <feTurbulence type="fractalNoise" baseFrequency="0.09 0.001" numOctaves="3" seed="4" />
          <feColorMatrix values="0 0 0 0 .59  0 0 0 0 .4  0 0 0 0 .25  5 0 0 0 -2.300" />
        </filter>
        <filter id="grain" x="0" y="0" width="100%" height="100%" colorInterpolationFilters="sRGB">
          <feTurbulence type="fractalNoise" baseFrequency="0.5 0.06" numOctaves="2" seed="7" />
          <feColorMatrix values="0 0 0 0 .62  0 0 0 0 .5  0 0 0 0 .38  3 0 0 0 -1.300" />
        </filter>
        <linearGradient id="wood">
          <stop offset="0" stopColor="#936d4c" />
          <stop offset=".5" stopColor="#936f4f" />
          <stop offset=".78" stopColor="#937454" />
          <stop offset="1" stopColor="#936f4e" />
        </linearGradient>
        <clipPath id="cut">
          <path clipRule="evenodd" d="M1 1h576v722H1zM52 52v43h175V52z" />
        </clipPath>
      </defs>
      <g clipPath="url(#cut)">
        <rect width="579" height="726" fill="url(#wood)" />
        <rect width="579" height="726" filter="url(#broad)" opacity=".4" />
        <rect width="579" height="726" filter="url(#grain)" opacity=".22" />
        <rect width="579" height="726" filter="url(#fine)" opacity=".4" />
      </g>
      <g stroke="#0a0a0a">
        <path d="M.500.500h576v723H.500z" />
        <path d="M0 1.500h577M0 722.500h577" opacity=".7" />
        <path d="M51.500 52h176v44h-176z" strokeWidth="1.500" />
        {notches.map((x) => (
          <g key={x} strokeWidth="1.500">
            <path d={`M${x + 0.5} .5v9.250h58.500V.5`} />
            <path d={`M${x + 0.5} 723v-9.250h58.500v9.250`} />
          </g>
        ))}
        <path d="M265 435h9.500v59H265zM265 545h9.500v59H265zM265 713.500V655h9.500v58.500" strokeWidth="1.500" />
        <path d="M557 439.500h1M561 441.500h1" />
      </g>
    </svg>
  );
}

const DocBtn = ({ children }: Kids) => <Cell w="w-[26px]"><Svg s={16} vb={16}><g stroke="#8f9197" strokeWidth="1.300">{children}</g></Svg></Cell>;

function ViewToolbar() {
  return (
    <div className="flex items-center opacity-85">
      <Cell w="w-[26px]"><Svg><circle cx="11.500" cy="6.500" r="5.800" fill="#f4f4f4" stroke="#555" /><path d="M11.500 2.500V5M11.500 8v2.500M7.500 6.500H10M13 6.500h2.500" strokeWidth="1.400" /><path d="M1 17l6-6" stroke="#3f86aa" strokeWidth="3" /></Svg></Cell>
      <Cell w="w-[26px]"><Svg><path d="M5 .500h12.500v12" strokeDasharray="3 2" /><circle cx="10.500" cy="8" r="5.300" fill="#e6ecf0" stroke="#555" /><path d="M1 17l5-5" stroke="#3f86aa" strokeWidth="3" /></Svg></Cell>
      <Cell w="w-[26px]"><Svg><path d="M.500 12l4-4L13 1.500l3.500 3L9 10l-4 6-4-1z" fill="#dedede" stroke="#555" /><path d="M4 8l4 4M9 5l3 4" stroke="#888" /><path d="M10 14h8" stroke="#3f86aa" strokeWidth="2.600" /><path d="M13 9.500L8.500 14l4.500 4z" fill="#3f86aa" stroke="none" /></Svg></Cell>
      <Cell w="w-[26px]"><Svg><path d="M.500 4l5-3h7l5 2v12l-4 2V8l-3-1.500L7.500 8v8l-2 1.500-5-1z" fill="#e8e8e8" stroke="#555" /><path d="M1 6l5 1v9.500l-5-1zM13.500 7l3.500-1v8.500l-3.500 1.500z" fill="#3f86aa" stroke="#1d5574" /></Svg></Cell>
      <Cell w="w-[26px]"><Svg><path d="M6 .500h7L9.500 5H12l-8 6 1.500-4.500H2.500z" fill="#ffb62e" stroke="#b06400" strokeWidth=".8" /><path d="M1 13l6-4 6-6 3.500 3L10 11l-5 6-4-1z" fill="#dedede" stroke="#555" /><path d="M10.500 17.500L14 8.500l3.500 9M12 14.500h4.500" stroke="#3f86aa" strokeWidth="1.500" /></Svg></Cell>
      <Cell w="w-[27px]"><Svg><path d="M.500 5.500l5-5h12v12l-5 5M.500 5.500h12v12M17.500 12.500h-5M12.500 5.500l5-5M11 .500v5M15 3v12M12.500 9h5" stroke="#444" /><path d="M.500 5.500h12v12H.500z" fill="#6aa9c6" /></Svg></Cell>
      <Cell w="w-[12px]"><Down c="#888" /></Cell>
      <Cell w="w-[28px]"><Svg><path d="M1 4l7-3.500L17 3v11l-8 3.500L1 14z" fill="#7fb6d2" stroke="#444" /><path d="M9 6l8-3v11l-8 3.500z" fill="#e8f2f7" stroke="#444" /><path d="M1 4l8 2M5 2v14" stroke="#444" /></Svg></Cell>
      <Cell w="w-[12px]"><Down c="#888" /></Cell>
      <Cell w="w-[29px]"><Svg><path d="M.500 9c4-7 13-7 17 0-4 6-13 6-17 0z" fill="#ddd" stroke="#999" /><circle cx="9" cy="8.500" r="4" fill="#666" stroke="#444" /><path d="M9 1v16" /></Svg></Cell>
      <Cell w="w-[10px]"><Down c="#888" /></Cell>
      <Cell w="w-[30px]"><Svg s={19}><ColorBall cx={8} cy={8} /><Pencil /></Svg></Cell>
      <Cell w="w-[22px]"><Svg s={19}><path d="M0 8.500h18V18H0z" fill="#444" stroke="none" /><path d="M1 11h3v2H1zM14 11h3v2h-3zM3 15h3v3H3zM9 15h3v3H9zM14 15h3v3h-3z" fill="#fff" stroke="none" /><ColorBall cx={9} cy={7.5} /></Svg></Cell>
      <Cell w="w-[16px]"><Down c="#888" /></Cell>
      <Cell w="w-[26px]"><Svg><path d="M.500 2h17v11H.500z" fill="#d4d4d4" stroke="#444" strokeWidth="1.300" /><path d="M9 14v3M5 17h8" strokeWidth="1.600" /></Svg></Cell>
      <Cell w="w-[12px]"><Down c="#888" /></Cell>
    </div>
  );
}

function Viewport() {
  return (
    <main className="relative w-[1575px] shrink-0 bg-white bg-[linear-gradient(105deg,rgba(255,255,255,0)_80%,rgba(255,255,255,0)_84%,rgba(255,255,255,0.35)_100%),radial-gradient(ellipse_800px_380px_at_83%_33%,rgba(220,223,233,1)_0%,rgba(221,224,234,0.9)_55%,rgba(228,231,240,0.5)_78%,rgba(230,233,241,0)_100%),linear-gradient(174deg,#fff_0%,#fff_24%,#eceef4_42%,#e3e6ef_49%,#f1f3f8_55%,#fff_62%,#fdfdfe_80%,#f6f7fb_100%)]">
      <div className="absolute right-[5px] top-[7px] flex">
        <DocBtn><path d="M2.500 2.500h11v12h-11zM2.500 4h11" /><path d="M8.500 6v6L5 9z" fill="#8f9197" stroke="none" /></DocBtn>
        <DocBtn><path d="M2.500 2.500h11v12h-11zM2.500 4h11" /><path d="M8 6v6l3.500-3z" fill="#8f9197" stroke="none" /></DocBtn>
        <DocBtn><path d="M3 13h10" strokeWidth="2" /></DocBtn>
        <DocBtn><path d="M5.500 5V1.500h9v7H10M1.500 6.500h8v7.500h-8zM1.500 8h8" /></DocBtn>
        <DocBtn><path d="M3.500 3l10 10M13.500 3l-10 10" /></DocBtn>
      </div>
      <div className="absolute left-[608px] top-[27px]"><ViewToolbar /></div>
      <div className="absolute left-[498px] top-[74px]"><Board /></div>
      <div className="absolute left-[-1px] top-[417px] flex h-[39px] w-[9px] items-center justify-center border border-l-0 border-[#7d7d7d] bg-[#f7f7f7]">
        <div className="h-[6px] w-[6px] rounded-full border border-[#999] bg-[#ccc]" />
      </div>
      <div className="absolute left-px top-[770px]">
        <svg width="70" height="60" viewBox="0 0 70 60">
          <path d="M40 45V22" stroke="#3c9b3c" strokeWidth="3.500" />
          <path d="M40 16l-4 8h8z" fill="#075c07" />
          <path d="M40 45H18" stroke="#0a0aa0" strokeWidth="4" />
          <path d="M11 45l9-4v8z" fill="#0a0aa0" />
          <circle cx="41" cy="45.500" r="3" fill="#b01010" />
          <text x="37.500" y="9.500" fontSize="9" fill="#178a17" fontFamily="DejaVu Sans">Y</text>
          <text x="1.500" y="45" fontSize="9" fill="#1111cc" fontFamily="DejaVu Sans">Z</text>
        </svg>
      </div>
      <div className="absolute bottom-[2px] left-[12px] font-[Lato] text-[14px] font-bold leading-[18px] tracking-[1px] text-[#111]">*Right</div>
    </main>
  );
}

const Grey = ({ children, pos = 0 }: Kids & { pos?: number }) => (
  <Svg>
    <circle cx={9 + pos} cy={9 + pos / 2} r="7" fill="#d0d0d0" stroke="#b2b2b2" />
    <ellipse cx={6.5 + pos} cy="6" rx="2.500" ry="1.800" fill="#f5f5f5" stroke="none" />
    <g stroke="#a8a8a8" fill="#f4f4f4">{children}</g>
  </Svg>
);

const side: React.ReactNode[] = [
  <Svg key="a" s={19}><ColorBall cx={8} cy={8} r={8} /><Pencil /></Svg>,
  <Svg key="b"><g fill="#d4d4d4" stroke="#b2b2b2"><circle cx="7" cy="6" r="5.500" /><circle cx="12.500" cy="10.500" r="5.300" /></g><ellipse cx="5" cy="4" rx="2" ry="1.500" fill="#f5f5f5" stroke="none" /><path d="M1 11l5 5M6.500 12v4.500H2" stroke="#a0a0a0" strokeWidth="1.800" /></Svg>,
  <Svg key="c"><path d="M.500 3.500h12v13H.500zM3.500 1.500h6v3h-6z" fill="#f0f0f0" stroke="#a8a8a8" /><circle cx="12.500" cy="11.500" r="5.300" fill="#d0d0d0" stroke="#a8a8a8" /><ellipse cx="11" cy="9.500" rx="2" ry="1.500" fill="#f5f5f5" stroke="none" /></Svg>,
  <Grey key="d"><path d="M0 12h5v5H0zM12 13h6v4h-6z" fill="#ccc" /><path d="M6 17l8-9 3 2-8 7z" /></Grey>,
  <Svg key="e" s={19}><path d="M1.500 3v11c1 3 10 3 11 0V3" fill="#f4f4f4" strokeWidth="1.300" /><ellipse cx="7" cy="3" rx="5.500" ry="2" fill="#fff" strokeWidth="1.300" /><path d="M4 8h6v5H4z" fill="#6fc0e8" /><Pencil /></Svg>,
  <Svg key="f"><circle cx="9" cy="9" r="6.500" stroke="#2b6f92" strokeWidth="1.200" /><circle cx="9" cy="9" r="3" stroke="#2b6f92" /><path d="M9 0v18M0 9h18" stroke="#2b6f92" strokeWidth="1.200" /></Svg>,
  <Svg key="g"><path d="M.500.500h17v17H.500zM.500 3.500h17" stroke="#a8a8a8" fill="#f0f0f0" /><circle cx="9" cy="10.500" r="4.800" fill="#c8c8c8" stroke="#aaa" /></Svg>,
  <Grey key="h" pos={-1}><path d="M8.500 8.500h9v9h-9zM8.500 11h9" /><circle cx="13" cy="14" r="2" fill="#bbb" /></Grey>,
  <Grey key="i" />,
  <Grey key="j"><path d="M.500 1.500h17v8H.500z" fill="none" strokeDasharray="3 1.500" /></Grey>,
  <Svg key="k"><g fill="#d4d4d4" stroke="#aaa"><circle cx="4.500" cy="4.500" r="4" /><circle cx="13.500" cy="4.500" r="4" /><circle cx="4.500" cy="13.500" r="4" fill="#f2f2f2" /><circle cx="13.500" cy="13.500" r="4" fill="#f2f2f2" /></g></Svg>,
  <Grey key="l" pos={-1}><circle cx="14" cy="14" r="2.500" strokeWidth="2.500" /></Grey>,
  <Grey key="m" pos={-1}><circle cx="13" cy="13" r="4.500" /><path d="M13 10v3h3" /></Grey>,
  <Grey key="n" pos={1}><path d="M.500 8.500h9v9h-9zM.500 11h9" /><path d="M17 9v5h-6M13 11l-3 3 3 3" strokeWidth="1.800" fill="none" /></Grey>,
];

function SideBar() {
  return (
    <aside className="flex flex-1 flex-col bg-[#f7f7f7]">
      <div className="ml-[6px] mt-[3px] h-0 border-t-2 border-dotted border-[#999]" />
      <div className="ml-[3px] flex flex-col items-center border-b border-[#7d7d7d] pb-[7px] pl-px pt-[8px]">
        {side.map((icon, i) => (
          <div key={i} className="flex h-[26px] items-center">{icon}</div>
        ))}
      </div>
    </aside>
  );
}

const views: [string, string, string, string][] = [
  ["3D View-1", "ml-[10px] w-[10px] bg-[#4a0a1c]", "ml-[5px]", "w-[94px]"],
  ["3D View-2", "w-[9px] bg-[#80560c]", "ml-[9px]", "w-[97px]"],
  ["3D View-3", "w-[11px] bg-[#a3000d]", "ml-[4px]", "w-[97px]"],
  ["3D View-4", "w-[11px] bg-[#a3000d]", "ml-[4px]", "w-[97px]"],
];

function BottomPanel() {
  return (
    <section className="flex h-[68px] w-[1886px] shrink-0 flex-col border-r border-[#9fb1b1] bg-[#f7f7f7]">
      <div className="flex min-h-0 flex-1 border-l-2 border-[#9fb5b8]">
        <div className="flex flex-1 flex-col">
          <div className="ml-[1px] mr-[2px] flex h-[52px] border-b border-l border-t-2 border-[#6d6d6d] border-b-[#dcdcdc] pt-[7px]">
            <div className="ml-[7px] flex h-[23px] w-[103px] shrink-0 items-center justify-center rounded-[3px] border border-[#c8c8c8] bg-[#fdfdfd] pb-px text-black">Capture 3D View</div>
            {views.map(([label, thumb, gap, w]) => (
              <React.Fragment key={label}>
                <div className={`mt-[4px] h-[15px] shrink-0 border border-t-2 border-black ${thumb}`} />
                <div className={`mt-[2px] h-[18px] shrink-0 whitespace-nowrap leading-[18px] tracking-[-0.1px] text-black ${gap} ${w}`}>{label}</div>
              </React.Fragment>
            ))}
            <Svg s={12} vb={12} className="ml-auto mr-[6px] mt-0"><path d="M1.500 8.500L6 4l4.500 4.500" stroke="#777" strokeWidth="2.200" /></Svg>
          </div>
          <div className="flex h-[16px] border-t border-[#7d7d7d] text-[#222]">
            {["M10 3v8L6 7zM5 3v8", "M9 3v8L5 7z", "M6 3v8l4-4z", "M5 3v8l4-4zM11 3v8"].map((d) => (
              <Cell key={d} w="w-[16px]" className="border-r border-[#888] bg-[#a9adb0]"><svg width="14" height="14"><path d={d} fill="#8b8f92" stroke="#8b8f92" /></svg></Cell>
            ))}
            <Cell w="w-[58px]" className="border-r border-[#7d7d7d] bg-[#d3d3d3] pb-px pl-[6px]">Model</Cell>
            <Cell w="w-[67px]" className="whitespace-nowrap border-r border-[#7d7d7d] bg-[#f7f7f7] pb-px pr-[2px] font-bold tracking-[-0.1px] text-black">3D Views</Cell>
            <Cell w="w-[109px]" className="whitespace-nowrap border-r border-[#7d7d7d] bg-[#d3d3d3] pb-px pr-[8px]">Motion Study 1</Cell>
          </div>
        </div>
      </div>
    </section>
  );
}

function StatusBar() {
  return (
    <footer className="flex h-[19px] shrink-0 items-center border-t border-[#7d7d7d] bg-[#f7f7f7] text-black">
      <span className="ml-px w-[1634px] shrink-0 whitespace-nowrap">SOLIDWORKS Premium 2022 SP2.0</span>
      <span className="w-[179px] shrink-0 whitespace-nowrap">Editing Part</span>
      <span className="w-[55px] shrink-0">MMGS</span>
      <svg width="5" height="3"><path d="M0 3h5L2.500 0z" fill="#333" /></svg>
      <Svg s={17} className="ml-[27px]"><path d="M1 4l6-3 10 7-1 5-5 4L1 9z" fill="#ddd" strokeWidth="1.300" /><path d="M1 5l10 7 6-4M11 12v5" /><circle cx="7" cy="5" r="2" /></Svg>
    </footer>
  );
}

export default function App() {
  return (
    <div className="flex h-[1078px] w-[1920px] flex-col overflow-hidden bg-[#f7f7f7] font-['Noto_Sans','Open_Sans',sans-serif] text-[11.5px] leading-[14px] tracking-[-0.2px]">
      <TitleBar />
      <Ribbon />
      <div className="flex h-[875px] shrink-0">
        <div className="relative flex w-[1886px] shrink-0 flex-col">
          <div className="absolute left-0 top-0 z-10"><CommandTabs /></div>
          <div className="flex h-[875px] border-t border-[#7d7d7d]">
            <div className="flex h-[874px] shrink-0 bg-[#f7f7f7] pt-[22px]"><FeaturePanel /></div>
            <Viewport />
          </div>
        </div>
        <div className="flex flex-1 border-t border-[#7d7d7d]"><SideBar /></div>
      </div>
      <BottomPanel />
      <StatusBar />
    </div>
  );
}
